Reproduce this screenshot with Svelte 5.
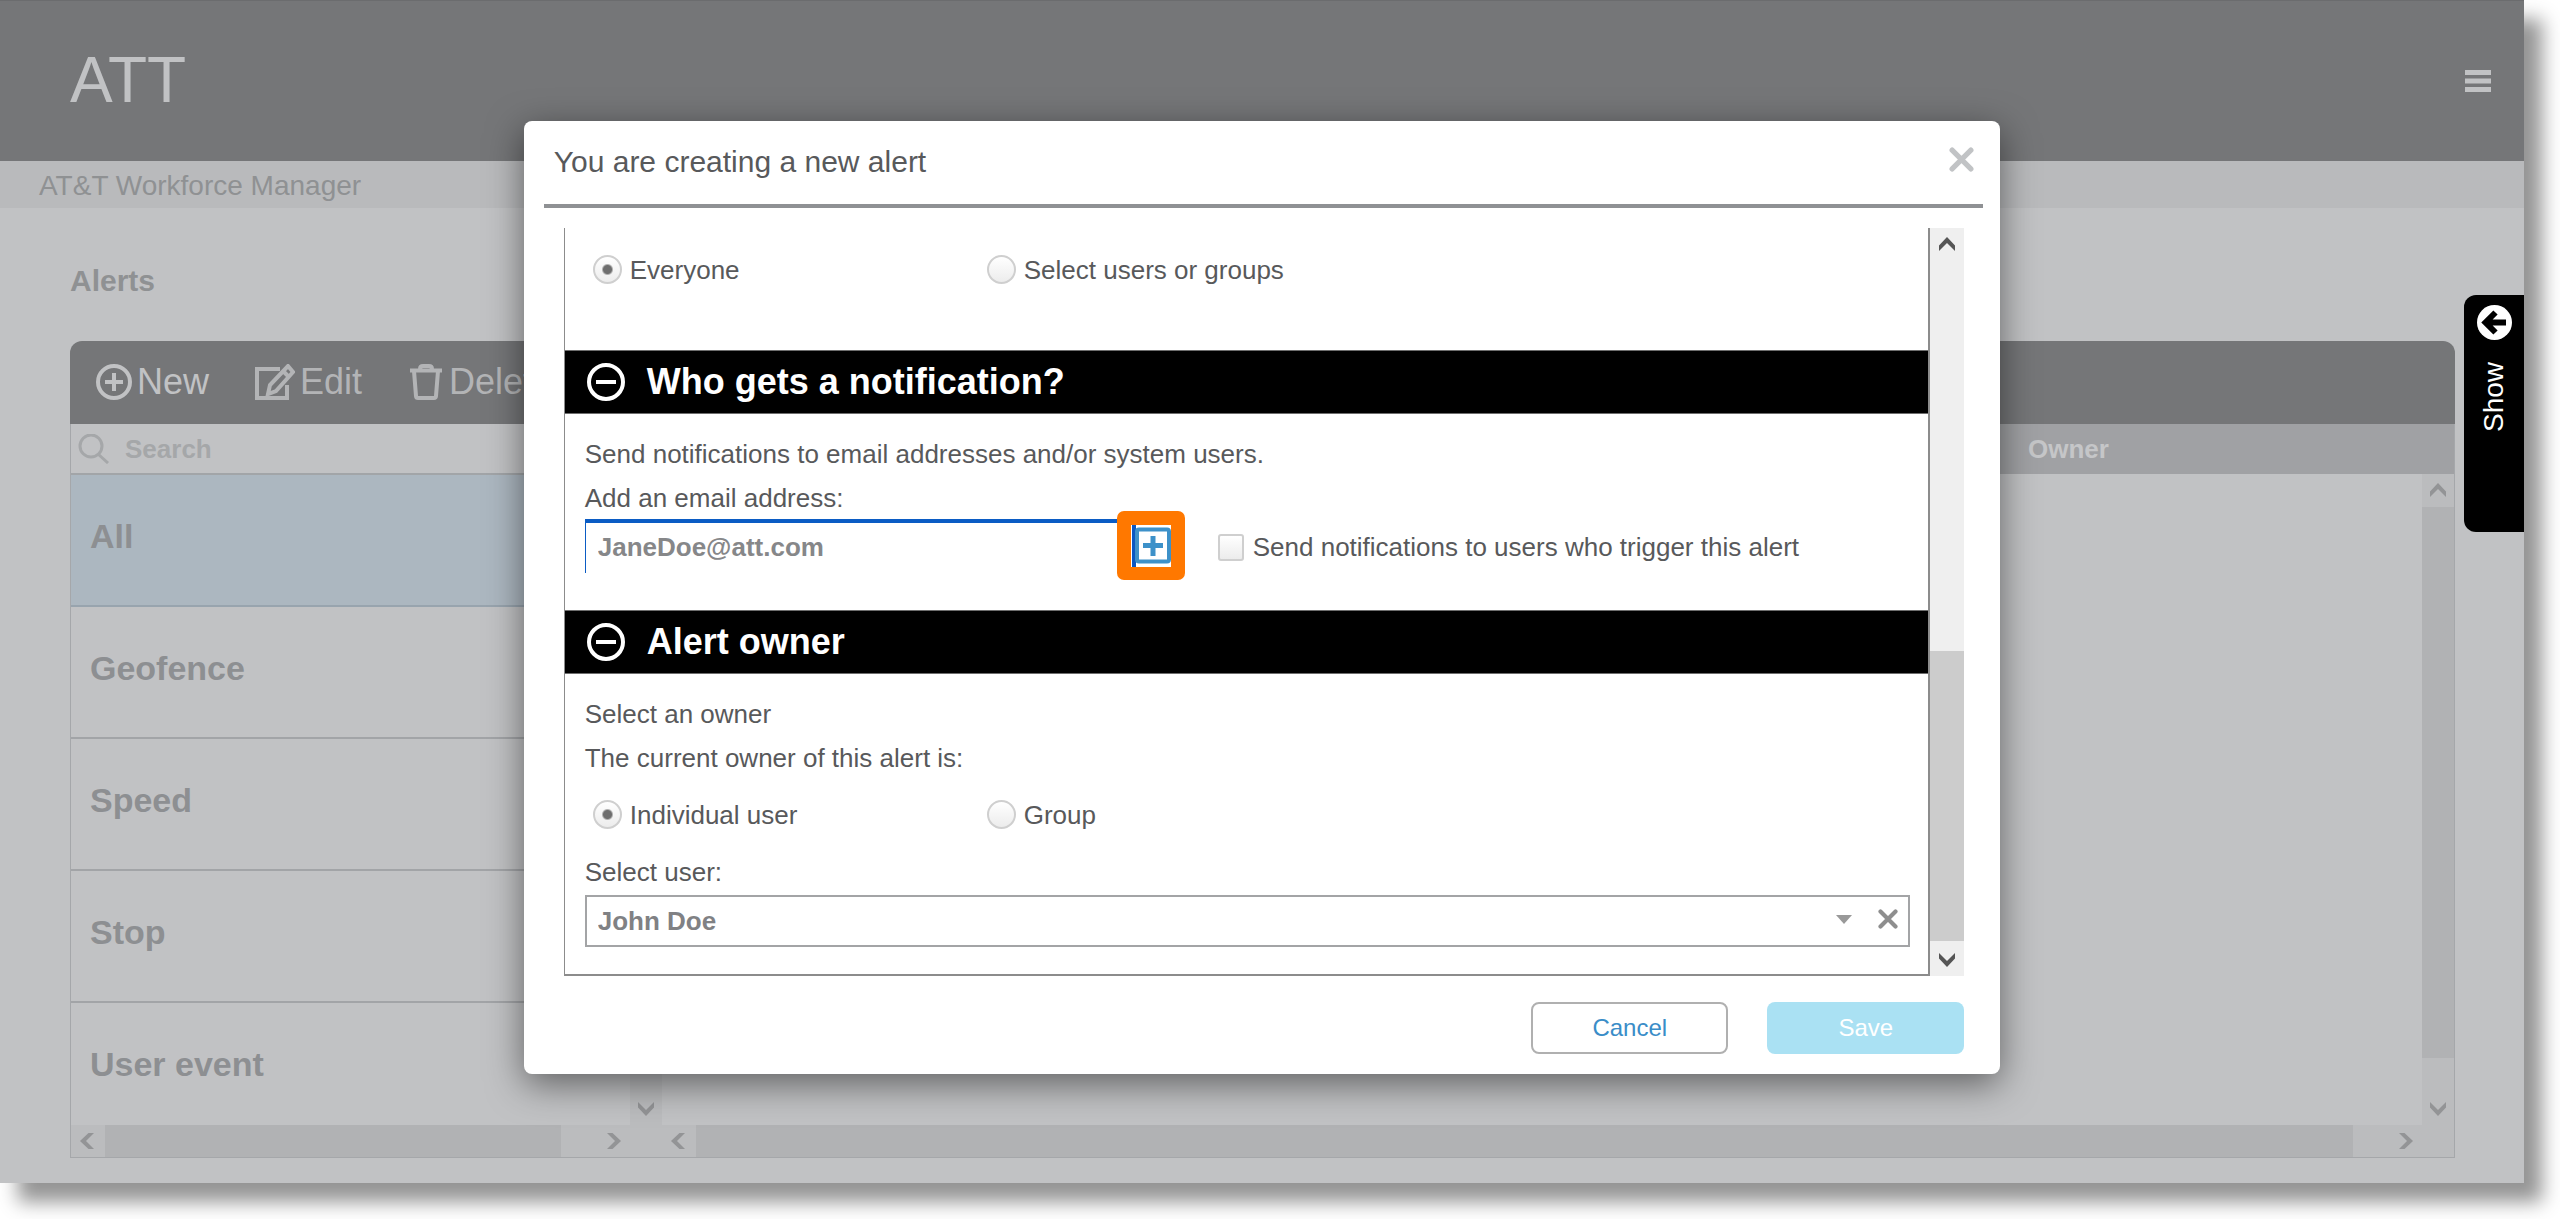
<script lang="ts">
  type Direction = 'up' | 'down' | 'left' | 'right';

  const CATEGORIES = ['All', 'Geofence', 'Speed', 'Stop', 'User event'];
  const USERS = ['John Doe'];

  let category = $state('All');
  let audience = $state('everyone');
  let ownerType = $state('user');
  let owner = $state('John Doe');
  let email = $state('JaneDoe@att.com');
  let notifyTrigger = $state(false);
  let notifyOpen = $state(true);
  let ownerOpen = $state(true);
</script>

{#snippet chevron(dir: Direction)}
  <svg class="chevron {dir}" viewBox="0 0 16 14" aria-hidden="true">
    <path d="M8 0 16 8.500V14L8 6 0 14V8.500Z" fill="currentColor" />
  </svg>
{/snippet}

{#snippet cross(size: number)}
  <svg width={size} height={size} viewBox="0 0 24 24" aria-hidden="true">
    <path d="M3 3 21 21M21 3 3 21" stroke="currentColor" stroke-width="5" stroke-linecap="round" />
  </svg>
{/snippet}

{#snippet sectionHead(title: string, open: boolean, toggle: () => void)}
  <h3 class="section-head">
    <button type="button" aria-expanded={open} onclick={toggle}>
      <svg width="38" height="38" viewBox="0 0 38 38" aria-hidden="true">
        <circle cx="19" cy="19" r="17" fill="none" stroke="#fff" stroke-width="4" />
        <path d={open ? 'M9 19H29' : 'M9 19H29M19 9V29'} stroke="#fff" stroke-width="4" />
      </svg>
      {title}
    </button>
  </h3>
{/snippet}

<div class="app">
  <header class="top">
    <h1>ATT</h1>
    <button class="menu" type="button" aria-label="Menu">
      <svg width="26" height="22" viewBox="0 0 26 22" aria-hidden="true">
        <path d="M0 2.500H26M0 11H26M0 19.500H26" stroke="currentColor" stroke-width="5" />
      </svg>
    </button>
  </header>

  <div class="crumb">AT&amp;T Workforce Manager</div>

  <main class="page">
    <h2>Alerts</h2>

    <div class="panel">
      <div class="toolbar">
        <button type="button">
          <svg width="36" height="36" viewBox="0 0 36 36" aria-hidden="true">
            <circle cx="18" cy="18" r="16" />
            <path d="M18 9V27M9 18H27" stroke-width="4" />
          </svg>
          New
        </button>
        <button type="button" class="dim">
          <svg width="40" height="36" viewBox="0 0 40 36" aria-hidden="true">
            <path d="M25 5H2V34H32V21" />
            <path d="M33 2 38 8 21 27 13 30 15 21Z" />
            <path d="M28 7 34 13" />
          </svg>
          Edit
        </button>
        <button type="button" class="dim">
          <svg width="36" height="36" viewBox="0 0 36 36" aria-hidden="true">
            <path d="M2 6.500H34M12 6V5Q12 2 15 2H21Q24 2 24 5V6" />
            <path d="M6 7 8 32Q8.200 34 10 34H26Q27.800 34 28 32L30 7" />
          </svg>
          Delete
        </button>
      </div>

      <div class="split">
        <div class="side">
          <label class="search">
            <svg width="32" height="30" viewBox="0 0 32 30" aria-hidden="true">
              <circle cx="13" cy="12" r="11" />
              <path d="M20 20 30 29" />
            </svg>
            <input type="search" placeholder="Search" aria-label="Search" />
          </label>
          <div class="side-body">
            <ul>
              {#each CATEGORIES as name}
                <li>
                  <button type="button" class:selected={category === name} onclick={() => (category = name)}>
                    {name}
                  </button>
                </li>
              {/each}
            </ul>
            <div class="vbar">
              {@render chevron('up')}
              <div class="thumb part"></div>
              {@render chevron('down')}
            </div>
          </div>
          <div class="hbar">
            {@render chevron('left')}
            <div class="thumb side-thumb"></div>
            {@render chevron('right')}
          </div>
        </div>

        <div class="grid">
          <table>
            <thead>
              <tr>
                <td class="lead"></td>
                <th scope="col">Owner</th>
              </tr>
            </thead>
          </table>
          <div class="grid-body">
            <div class="vbar">
              {@render chevron('up')}
              <div class="thumb grid-vthumb"></div>
              {@render chevron('down')}
            </div>
          </div>
          <div class="hbar">
            {@render chevron('left')}
            <div class="thumb grid-hthumb"></div>
            {@render chevron('right')}
          </div>
        </div>
      </div>
    </div>
  </main>

  <button class="show-tab" type="button">
    <svg width="35" height="35" viewBox="0 0 35 35" aria-hidden="true">
      <circle cx="17.500" cy="17.500" r="17.500" fill="#fff" />
      <path d="M29 17.500H9M18.500 7.500 8.500 17.500 18.500 27.500" fill="none" stroke="#000" stroke-width="6" />
    </svg>
    <span>Show</span>
  </button>

  <div class="overlay">
    <div class="modal" role="dialog" aria-modal="true" aria-labelledby="modal-title">
      <div class="modal-head">
        <h2 id="modal-title">You are creating a new alert</h2>
        <button type="button" class="plain close" aria-label="Close">{@render cross(25)}</button>
      </div>

      <div class="modal-body">
        <form class="pane" id="alert-form">
          <div class="section audience">
            <div class="radios">
              <label><input type="radio" value="everyone" bind:group={audience} />Everyone</label>
              <label><input type="radio" value="some" bind:group={audience} />Select users or groups</label>
            </div>
          </div>

          {@render sectionHead('Who gets a notification?', notifyOpen, () => (notifyOpen = !notifyOpen))}
          {#if notifyOpen}
            <div class="section notify">
              <p>Send notifications to email addresses and/or system users.</p>
              <label for="email">Add an email address:</label>
              <div class="email-row">
                <input id="email" class="email" type="text" bind:value={email} />
                <button type="button" class="add" aria-label="Add email address">
                  <svg width="40" height="42" viewBox="0 0 40 42" aria-hidden="true">
                    <path d="M0 0H40V42H0Z" fill="#fff" />
                    <path d="M3 0V42" stroke="#0b57c2" stroke-width="4" />
                    <rect x="6" y="4.500" width="32" height="32" rx="2" fill="none" stroke="#3d91c9" stroke-width="4" />
                    <path d="M22 11V31M12 20.500H32" stroke="#3d91c9" stroke-width="5" />
                  </svg>
                </button>
                <label class="check">
                  <input type="checkbox" bind:checked={notifyTrigger} />
                  Send notifications to users who trigger this alert
                </label>
              </div>
            </div>
          {/if}

          {@render sectionHead('Alert owner', ownerOpen, () => (ownerOpen = !ownerOpen))}
          {#if ownerOpen}
            <div class="section owner">
              <p>Select an owner</p>
              <p>The current owner of this alert is:</p>
              <div class="radios">
                <label><input type="radio" value="user" bind:group={ownerType} />Individual user</label>
                <label><input type="radio" value="group" bind:group={ownerType} />Group</label>
              </div>
              <label for="owner">Select user:</label>
              <div class="picker">
                <select id="owner" bind:value={owner}>
                  {#each USERS as user}
                    <option>{user}</option>
                  {/each}
                </select>
                <svg class="caret" width="16" height="9" viewBox="0 0 16 9" aria-hidden="true">
                  <path d="M0 0H16L8 9Z" fill="#999" />
                </svg>
                <button type="button" class="plain clear" aria-label="Clear user">{@render cross(20)}</button>
              </div>
            </div>
          {/if}
        </form>

        <div class="vbar modal-bar">
          {@render chevron('up')}
          <div class="thumb modal-thumb"></div>
          {@render chevron('down')}
        </div>
      </div>

      <div class="modal-foot">
        <button type="button" class="btn cancel">Cancel</button>
        <button type="submit" form="alert-form" class="btn save" disabled>Save</button>
      </div>
    </div>
  </div>
</div>

<style>
  :global(body) { background: #fff; }

  .app, .app * { box-sizing: border-box; }

  .app {
    position: relative;
    display: flex;
    flex-direction: column;
    height: calc(100vh - 36px);
    min-height: 1100px;
    margin-right: 36px;
    margin-bottom: 36px;
    background: #c1c2c4;
    box-shadow: 18px 19px 18px rgba(0, 0, 0, 0.42);
    color: #58595b;
    font-family: "Liberation Sans", Arial, sans-serif;
    font-size: 26px;
    line-height: 26px;
  }

  h1, h2, h3, p, ul {
    margin: 0;
    padding: 0;
  }

  button, input, select {
    font: inherit;
    color: inherit;
    margin: 0;
  }

  button {
    padding: 0;
    border: 0;
    background: none;
    cursor: pointer;
  }

  svg {
    display: block;
    flex: none;
  }

  /* Page behind the dialog */
  .top {
    display: flex;
    align-items: center;
    justify-content: space-between;
    padding: 42px 33px 43px 70px;
    border-top: 1px solid #6b6c6e;
    background: #757678;
    color: #c1c2c4;
  }

  .top h1 {
    font-size: 64px;
    font-weight: 400;
    line-height: 75px;
  }

  .crumb {
    padding: 2px 39px 0;
    background: #b9babc;
    color: #8f9193;
    font-size: 28px;
    line-height: 45px;
  }

  .page {
    display: flex;
    flex-direction: column;
    flex: 1;
    min-height: 0;
    padding: 53px 69px 25px 70px;
  }

  .page h2 {
    margin-bottom: 40px;
    color: #8f9193;
    font-size: 30px;
    line-height: 40px;
  }

  .panel {
    display: flex;
    flex-direction: column;
    flex: 1;
    min-height: 0;
  }

  .toolbar {
    display: flex;
    gap: 46px;
    padding: 22px 26px 23px;
    border-radius: 12px 12px 0 0;
    background: #757678;
    color: #c1c2c4;
    font-size: 36px;
    line-height: 38px;
  }

  .toolbar button {
    display: flex;
    align-items: center;
    gap: 5px;
  }

  .toolbar .dim { color: #b3b4b6; }

  .toolbar svg, .search svg {
    fill: none;
    stroke: currentColor;
    stroke-width: 3;
  }

  .toolbar svg { stroke-width: 4; }

  .split {
    display: flex;
    flex: 1;
    min-height: 0;
    border: solid #a5a7aa;
    border-width: 0 1px 1px;
  }

  .side {
    display: flex;
    flex-direction: column;
    flex: 0 0 591px;
    min-height: 0;
  }

  .search {
    display: flex;
    align-items: center;
    gap: 15px;
    height: 51px;
    padding: 1px 7px 0;
    border-bottom: 2px solid #a2a5a8;
    color: #a5a7a9;
  }

  .search input {
    flex: 1;
    padding: 1px 0 0;
    border: 0;
    outline: 0;
    background: none;
    font-weight: 700;
  }

  .search input::placeholder {
    color: #a5a7a9;
    opacity: 1;
  }

  .side-body {
    display: flex;
    flex: 1;
    min-height: 0;
  }

  .side ul {
    flex: 1;
    overflow: hidden;
    list-style: none;
  }

  .side li button {
    display: block;
    width: 100%;
    height: 132px;
    padding: 0 19px 9px;
    border-bottom: 2px solid #a2a4a7;
    color: #8d8f92;
    font-size: 34px;
    font-weight: 700;
    text-align: left;
  }

  .side li .selected {
    border-bottom-color: #98a4ae;
    background: #acb7c0;
  }

  .grid {
    display: flex;
    flex-direction: column;
    flex: 1;
    min-width: 0;
  }

  table {
    width: 100%;
    border-collapse: collapse;
    background: #a0a1a4;
  }

  th, td {
    height: 50px;
    padding: 0 13px;
    color: #c5c6c8;
    text-align: left;
  }

  .lead { width: 75.5%; }

  .grid-body {
    display: flex;
    flex: 1;
    justify-content: flex-end;
    min-height: 0;
  }

  /* Scrollbars */
  .vbar, .hbar {
    display: flex;
    align-items: center;
    justify-content: space-between;
    flex: none;
    background: #bbbcbe;
    color: #939496;
  }

  .vbar {
    flex-direction: column;
    width: 32px;
    padding: 9px 0;
  }

  .hbar {
    height: 32px;
    padding: 0 40px 0 8px;
  }

  .thumb {
    background: #b1b2b4;
    flex: none;
  }

  .part {
    width: 32px;
    height: 60%;
  }

  .side-thumb {
    width: 84%;
    height: 32px;
    margin-right: auto;
    margin-left: 10px;
  }

  .grid-hthumb {
    width: 95%;
    height: 32px;
    margin-right: auto;
    margin-left: 10px;
  }

  .grid-vthumb {
    width: 32px;
    height: 87%;
    margin-top: 10px;
    margin-bottom: auto;
  }

  .chevron {
    width: 16px;
    height: 14px;
  }

  .down { transform: rotate(180deg); }
  .left { transform: rotate(-90deg); }
  .right { transform: rotate(90deg); }

  .show-tab {
    position: absolute;
    top: 295px;
    right: 0;
    display: flex;
    flex-direction: column;
    align-items: center;
    gap: 22px;
    width: 60px;
    height: 237px;
    padding: 10px 0 0;
    border-radius: 12px 0 0 12px;
    background: #000;
    color: #fff;
    font-size: 28px;
  }

  .show-tab span {
    writing-mode: vertical-rl;
    transform: rotate(180deg);
  }

  /* Dialog */
  .overlay {
    position: absolute;
    inset: 0;
    display: flex;
    align-items: flex-start;
    justify-content: center;
    padding-top: 121px;
    pointer-events: none;
  }

  .modal {
    width: 58.5%;
    border-radius: 8px;
    background: #fff;
    box-shadow: 0 10px 36px rgba(0, 0, 0, 0.5);
    pointer-events: auto;
  }

  .modal-head {
    display: flex;
    align-items: center;
    justify-content: space-between;
    margin: 0 17px 0 20px;
    padding: 19px 9px 21px 10px;
    border-bottom: 4px solid #8f9194;
  }

  .modal-head h2 {
    font-size: 30px;
    font-weight: 400;
    line-height: 43px;
  }

  .close {
    margin-bottom: 4px;
    color: #c1c3c5;
  }

  .modal-body {
    display: flex;
    margin: 20px 36px 0 40px;
  }

  .pane {
    flex: 1;
    min-width: 0;
    border: solid #8c8c8c;
    border-width: 0 2px 2px 1px;
  }

  .section {
    display: flex;
    flex-direction: column;
    padding: 27px 18px 27px 20px;
  }

  .audience { padding-bottom: 66px; }
  .notify { padding-bottom: 30px; }
  .section p { margin-bottom: 18px; }

  .radios {
    display: grid;
    grid-template-columns: 394px 1fr;
    padding-left: 8px;
  }

  .radios label {
    display: flex;
    align-items: center;
    gap: 8px;
  }

  input[type='radio'] {
    appearance: none;
    width: 29px;
    height: 29px;
    border: 2px solid #cfcfcf;
    border-radius: 50%;
    background: linear-gradient(#fff, #ececec);
  }

  input[type='radio']:checked {
    background: radial-gradient(circle, #6e6e6e 0 4px, transparent 6px), linear-gradient(#fff, #ececec);
  }

  .section-head button {
    display: flex;
    align-items: center;
    gap: 22px;
    width: 100%;
    height: 64px;
    padding: 0 22px 1px;
    border: solid #6e6e6e;
    border-width: 1px 0;
    background: #000;
    color: #fff;
    font-size: 36px;
    font-weight: 700;
  }

  .email-row {
    display: flex;
    align-items: center;
  }

  .email {
    width: 532px;
    height: 54px;
    padding: 0 12px;
    border: solid #0b5cc4;
    border-width: 4px 0 0 1px;
    outline: 0;
    color: #868789;
    font-weight: 700;
  }

  .add {
    padding: 14px 14px 13px;
    border-radius: 7px;
    background: #ff7800;
  }

  .check {
    display: flex;
    align-items: center;
    gap: 9px;
    margin-left: 33px;
    padding-top: 3px;
  }

  input[type='checkbox'] {
    appearance: none;
    width: 26px;
    height: 27px;
    border: 2px solid #cfcfcf;
    border-radius: 3px;
    background: linear-gradient(#fff, #ececec);
  }

  input[type='checkbox']:checked { background: #6e6e6e; }

  .owner .radios {
    margin-top: 11px;
    margin-bottom: 30px;
  }

  .picker {
    display: flex;
    align-items: center;
    height: 52px;
    margin-top: 10px;
    padding-right: 10px;
    border: 2px solid #a3a4a6;
  }

  .picker select {
    appearance: none;
    flex: 1;
    height: 48px;
    padding: 0 11px;
    border: 0;
    outline: 0;
    background: none;
    color: #808184;
    font-weight: 700;
  }

  .caret, .clear { margin-bottom: 4px; }

  .clear {
    margin-left: 26px;
    color: #8e8e8e;
  }

  .modal-bar {
    width: 34px;
    background: #efefef;
    color: #555;
  }

  .modal-thumb {
    width: 34px;
    height: 290px;
    margin-top: auto;
    margin-bottom: 12px;
    background: #ccc;
  }

  .modal-foot {
    display: flex;
    justify-content: flex-end;
    gap: 39px;
    padding: 26px 36px 20px;
  }

  .btn {
    width: 197px;
    height: 52px;
    border-radius: 8px;
    font-size: 24px;
  }

  .cancel {
    border: 2px solid #b0b0b0;
    color: #3a8dc8;
  }

  .save {
    background: #aae1f3;
    color: #fff;
  }
</style>
